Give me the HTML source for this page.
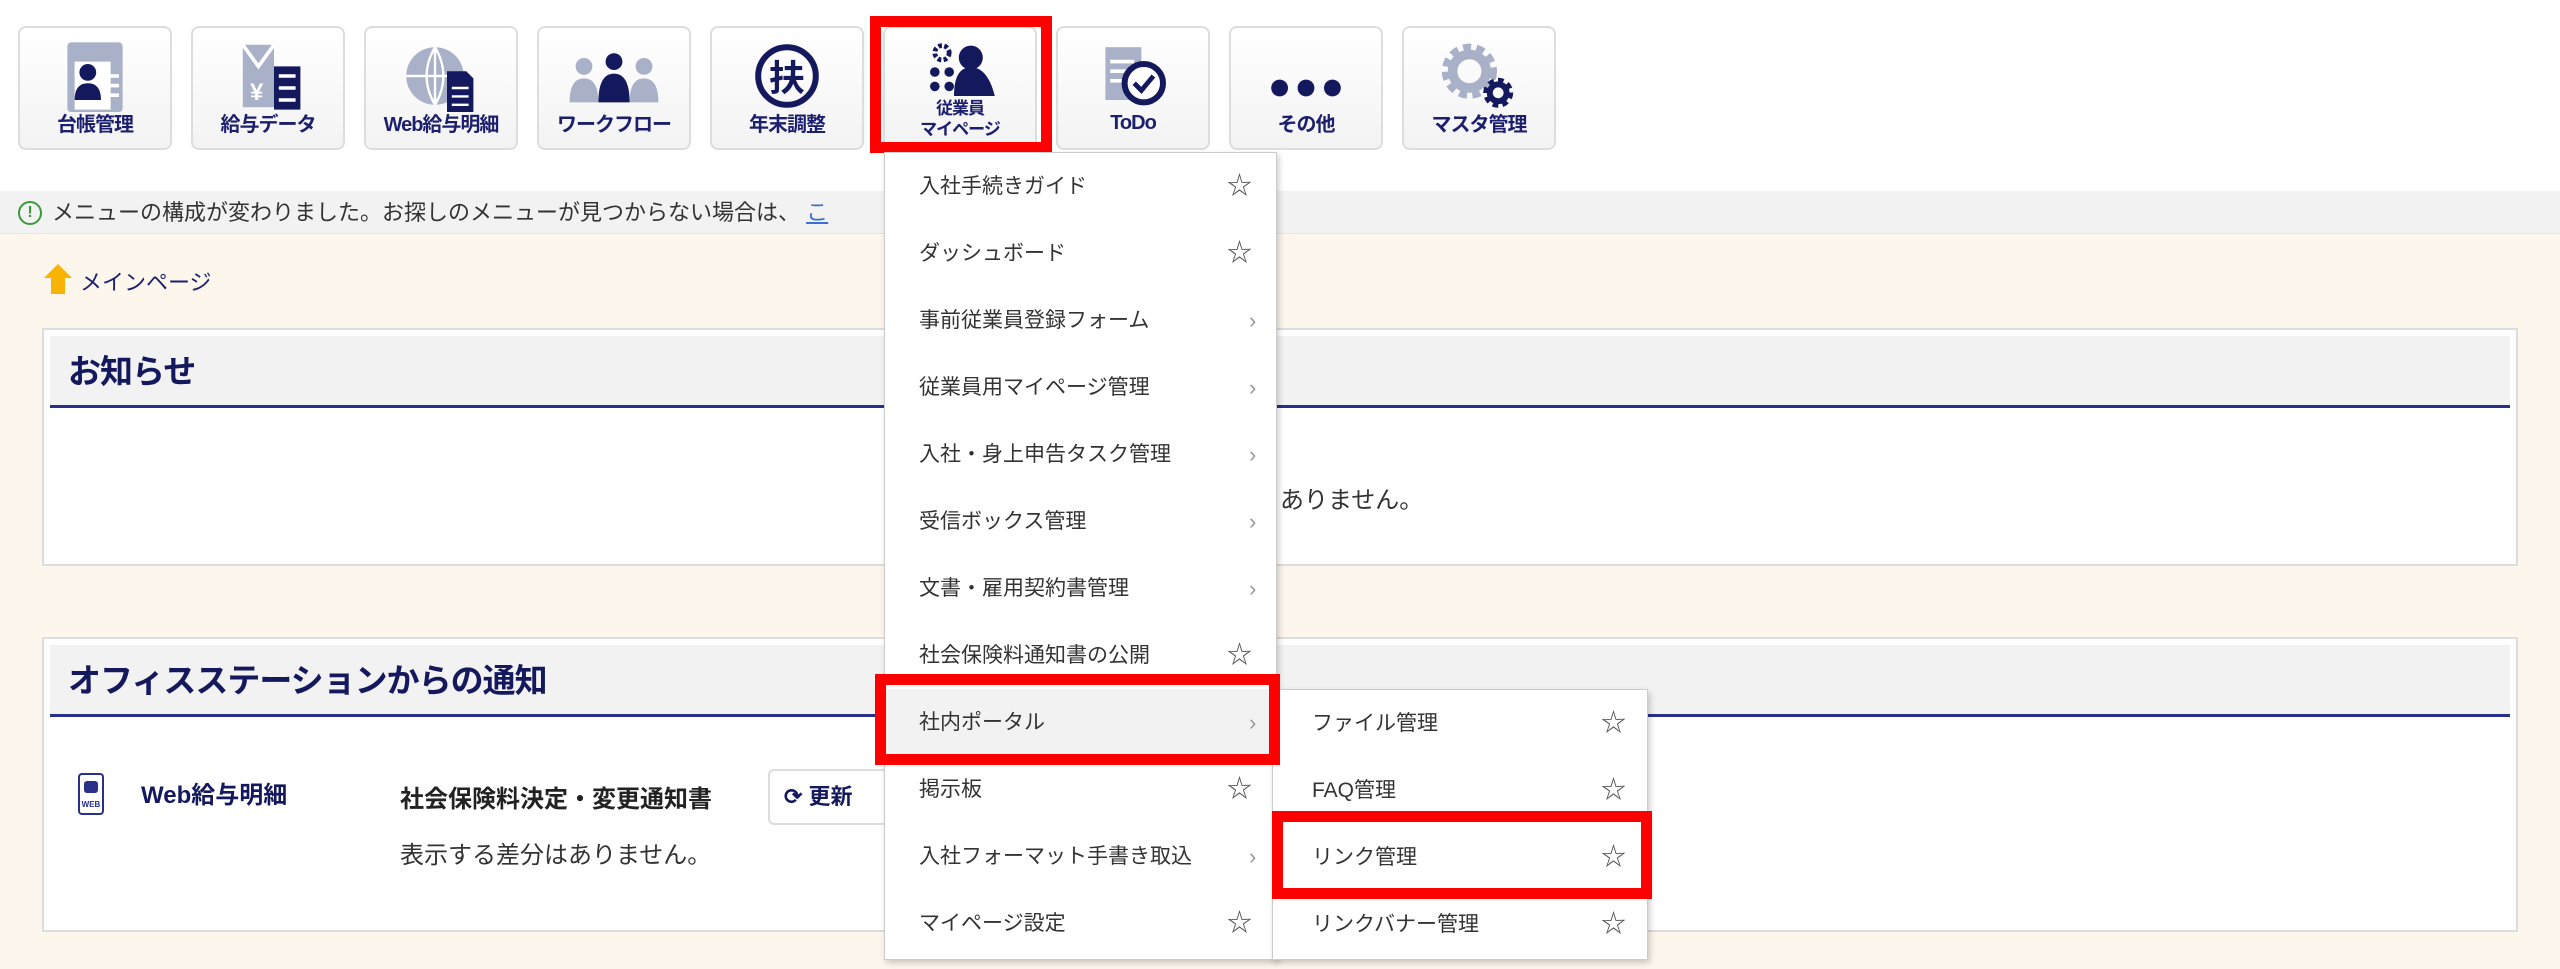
<!DOCTYPE html>
<html><head><meta charset="utf-8">
<style>
*{margin:0;padding:0;box-sizing:border-box}
body{width:2560px;height:969px;overflow:hidden;background:#fdf6ec;font-family:"Liberation Sans","Noto Sans CJK JP",sans-serif;color:#333;position:relative}
.top{position:absolute;left:0;top:0;width:2560px;height:191px;background:#fff}
.btn{position:absolute;top:26px;width:154px;height:124px;border:2px solid #ddd;border-radius:8px;background:linear-gradient(#fff,#f3f3f3);text-align:center}
.btn svg{position:absolute;left:50%;top:12px;transform:translateX(-50%) scale(1.2);transform-origin:50% 0}
.btn .lb{position:absolute;left:0;right:0;top:80px;font-size:20px;font-weight:bold;color:#1c1f6e;letter-spacing:-1px}
.red{position:absolute;border:11px solid #f00}
.info{position:absolute;left:0;top:191px;width:2560px;height:43px;background:#f2f2f2;border-bottom:1px solid #e4e4e4;font-size:22px;line-height:43px;padding-left:52px;color:#333}
.info .ic{position:absolute;left:18px;top:10px;width:24px;height:24px;border:2px solid #3a9a3a;border-radius:50%;color:#3a9a3a;font-size:16px;line-height:20px;text-align:center;font-weight:bold}
.bc{position:absolute;left:44px;top:264px;font-size:22px;color:#1c1f6e}
.panel{position:absolute;left:42px;width:2476px;background:#fff;border:2px solid #ddd}
.ph{margin:6px 6px 0;height:72px;background:#f2f2f2;border-bottom:3px solid #2a2f8a;font-size:33px;font-weight:bold;color:#14195e;line-height:72px;padding-left:18px;letter-spacing:-1px}
.menu{position:absolute;background:#fff;border:1px solid #ccc;box-shadow:2px 3px 6px rgba(0,0,0,.2)}
.it{position:absolute;left:0;right:0;height:67px;font-size:21px;line-height:67px;color:#333}
.it .st{position:absolute;font-size:25px;color:#555;top:0}
.it .ch{position:absolute;font-size:22px;color:#999;top:0}
</style></head><body>
<div class="top"></div>

<div class="btn" style="left:18px"><svg width="70" height="64" viewBox="0 0 70 64"><rect x="12" y="2" width="46" height="58" rx="3" fill="#a9b1c8"/><rect x="18" y="18" width="30" height="40" fill="#fff"/><circle cx="29" cy="27" r="7" fill="#14195e"/><path d="M18 50q0-14 11-14t11 14z" fill="#14195e"/><path d="M43 30h12M43 38h12M43 46h12" stroke="#fff" stroke-width="3"/></svg><div class="lb">台帳管理</div></div>
<div class="btn" style="left:191px"><svg width="70" height="64" viewBox="0 0 70 64"><rect x="14" y="4" width="26" height="52" fill="#a9b1c8"/><path d="M14 4l13 18 13-18" stroke="#fff" stroke-width="3" fill="none"/><text x="20" y="50" font-size="20" fill="#fff" font-weight="bold">¥</text><rect x="40" y="22" width="22" height="36" fill="#14195e"/><path d="M44 30h14M44 40h14M44 50h14" stroke="#fff" stroke-width="3"/></svg><div class="lb">給与データ</div></div>
<div class="btn" style="left:364px"><svg width="70" height="64" viewBox="0 0 70 64"><circle cx="30" cy="30" r="24" fill="#a9b1c8"/><path d="M30 6v48M6 30h48M30 6q-14 24 0 48M30 6q14 24 0 48" stroke="#fff" stroke-width="2" fill="none"/><path d="M40 26h16l6 6v28h-22z" fill="#14195e"/><path d="M44 40h14M44 47h14M44 54h14" stroke="#fff" stroke-width="2"/></svg><div class="lb">Web給与明細</div></div>
<div class="btn" style="left:537px"><svg width="90" height="64" viewBox="0 0 90 64"><circle cx="20" cy="22" r="7" fill="#a9b1c8"/><path d="M8 52q0-20 12-20t12 20z" fill="#a9b1c8"/><circle cx="70" cy="22" r="7" fill="#a9b1c8"/><path d="M58 52q0-20 12-20t12 20z" fill="#a9b1c8"/><circle cx="45" cy="18" r="7" fill="#14195e"/><path d="M32 52q0-24 13-24t13 24z" fill="#14195e"/></svg><div class="lb">ワークフロー</div></div>
<div class="btn" style="left:710px"><svg width="70" height="64" viewBox="0 0 70 64"><circle cx="35" cy="30" r="24" fill="none" stroke="#14195e" stroke-width="5"/><text x="35" y="42" text-anchor="middle" font-size="30" font-weight="bold" fill="#14195e" font-family="Noto Sans CJK JP">扶</text></svg><div class="lb">年末調整</div></div>
<div class="btn" style="left:883px"><svg width="70" height="56" viewBox="0 0 70 56" style="top:8px"><circle cx="20" cy="14" r="6" fill="none" stroke="#14195e" stroke-width="4" stroke-dasharray="3 2"/><circle cx="14" cy="30" r="4" fill="#14195e"/><circle cx="26" cy="30" r="4" fill="#14195e"/><circle cx="14" cy="42" r="4" fill="#14195e"/><circle cx="26" cy="42" r="4" fill="#14195e"/><circle cx="44" cy="18" r="10" fill="#14195e"/><path d="M30 50q0-24 14-24t20 24z" fill="#14195e"/></svg><div class="lb" style="top:70px;font-size:17px;line-height:21px">従業員<br>マイページ</div></div>
<div class="btn" style="left:1056px"><svg width="70" height="64" viewBox="0 0 70 64"><rect x="12" y="6" width="30" height="44" fill="#a9b1c8"/><path d="M16 18h20M16 26h20M16 34h16" stroke="#fff" stroke-width="3"/><circle cx="44" cy="36" r="16" fill="#fff" stroke="#14195e" stroke-width="5"/><path d="M36 36l6 6 10-12" stroke="#14195e" stroke-width="4" fill="none"/></svg><div class="lb" style="top:84px">ToDo</div></div>
<div class="btn" style="left:1229px"><svg width="70" height="64" viewBox="0 0 70 64"><circle cx="13" cy="40" r="7" fill="#14195e"/><circle cx="35" cy="40" r="7" fill="#14195e"/><circle cx="57" cy="40" r="7" fill="#14195e"/></svg><div class="lb">その他</div></div>
<div class="btn" style="left:1402px"><svg width="80" height="64" viewBox="0 0 80 64"><circle cx="32" cy="26" r="18" fill="none" stroke="#a9b1c8" stroke-width="10" stroke-dasharray="6 4"/><circle cx="32" cy="26" r="14" fill="none" stroke="#a9b1c8" stroke-width="8"/><circle cx="56" cy="44" r="9" fill="none" stroke="#14195e" stroke-width="7" stroke-dasharray="4 3"/><circle cx="56" cy="44" r="7" fill="none" stroke="#14195e" stroke-width="5"/></svg><div class="lb">マスタ管理</div></div>
<div class="red" style="left:870px;top:16px;width:182px;height:137px"></div>

<div class="info"><span class="ic">!</span>メニューの構成が変わりました。お探しのメニューが見つからない場合は、 <span style="color:#3b6fd0;text-decoration:underline">こ</span></div>
<div class="bc"><svg width="28" height="30" viewBox="0 0 28 30" style="vertical-align:-4px;margin-right:8px"><path d="M14 0L0 14h7v16h14V14h7z" fill="#f8b400"/></svg>メインページ</div>

<div class="panel" style="top:328px;height:238px"><div class="ph">お知らせ</div><div style="position:absolute;left:1236px;top:150px;font-size:24px">ありません。</div></div>
<div class="panel" style="top:637px;height:295px"><div class="ph">オフィスステーションからの通知</div>
<svg style="position:absolute;left:34px;top:134px" width="26" height="42" viewBox="0 0 26 42"><rect x="1" y="1" width="24" height="40" rx="3" fill="#fff" stroke="#2a2f8a" stroke-width="2"/><rect x="6" y="8" width="14" height="12" rx="3" fill="#2a2f8a"/><text x="13" y="34" font-size="8" text-anchor="middle" fill="#2a2f8a" font-weight="bold">WEB</text></svg>
<div style="position:absolute;left:97px;top:136px;font-size:24px;font-weight:bold;color:#14195e">Web給与明細</div>
<div style="position:absolute;left:356px;top:140px;font-size:24px;font-weight:bold;color:#222">社会保険料決定・変更通知書</div>
<div style="position:absolute;left:724px;top:130px;width:120px;height:56px;border:2px solid #ddd;border-radius:6px;font-size:22px;font-weight:bold;color:#14195e;line-height:52px;padding-left:14px">⟳ 更新</div>
<div style="position:absolute;left:356px;top:196px;font-size:24px;color:#333">表示する差分はありません。</div>
</div>

<div class="menu" style="left:884px;top:152px;width:393px;height:808px">
<div class="it" style="top:0"><span style="padding-left:34px">入社手続きガイド</span><span class="st" style="left:342px">☆</span></div>
<div class="it" style="top:67px"><span style="padding-left:34px">ダッシュボード</span><span class="st" style="left:342px">☆</span></div>
<div class="it" style="top:134px"><span style="padding-left:34px">事前従業員登録フォーム</span><span class="ch" style="left:364px">›</span></div>
<div class="it" style="top:201px"><span style="padding-left:34px">従業員用マイページ管理</span><span class="ch" style="left:364px">›</span></div>
<div class="it" style="top:268px"><span style="padding-left:34px">入社・身上申告タスク管理</span><span class="ch" style="left:364px">›</span></div>
<div class="it" style="top:335px"><span style="padding-left:34px">受信ボックス管理</span><span class="ch" style="left:364px">›</span></div>
<div class="it" style="top:402px"><span style="padding-left:34px">文書・雇用契約書管理</span><span class="ch" style="left:364px">›</span></div>
<div class="it" style="top:469px"><span style="padding-left:34px">社会保険料通知書の公開</span><span class="st" style="left:342px">☆</span></div>
<div class="it" style="top:536px;background:#f2f2f2"><span style="padding-left:34px">社内ポータル</span><span class="ch" style="left:364px">›</span></div>
<div class="it" style="top:603px"><span style="padding-left:34px">掲示板</span><span class="st" style="left:342px">☆</span></div>
<div class="it" style="top:670px"><span style="padding-left:34px">入社フォーマット手書き取込</span><span class="ch" style="left:364px">›</span></div>
<div class="it" style="top:737px"><span style="padding-left:34px">マイページ設定</span><span class="st" style="left:342px">☆</span></div>
</div>
<div class="menu" style="left:1272px;top:689px;width:376px;height:271px">
<div class="it" style="top:0"><span style="padding-left:39px">ファイル管理</span><span class="st" style="left:328px">☆</span></div>
<div class="it" style="top:67px"><span style="padding-left:39px">FAQ管理</span><span class="st" style="left:328px">☆</span></div>
<div class="it" style="top:134px"><span style="padding-left:39px">リンク管理</span><span class="st" style="left:328px">☆</span></div>
<div class="it" style="top:201px"><span style="padding-left:39px">リンクバナー管理</span><span class="st" style="left:328px">☆</span></div>
</div>
<div class="red" style="left:875px;top:674px;width:405px;height:91px"></div>
<div class="red" style="left:1272px;top:811px;width:380px;height:88px"></div>
</body></html>
